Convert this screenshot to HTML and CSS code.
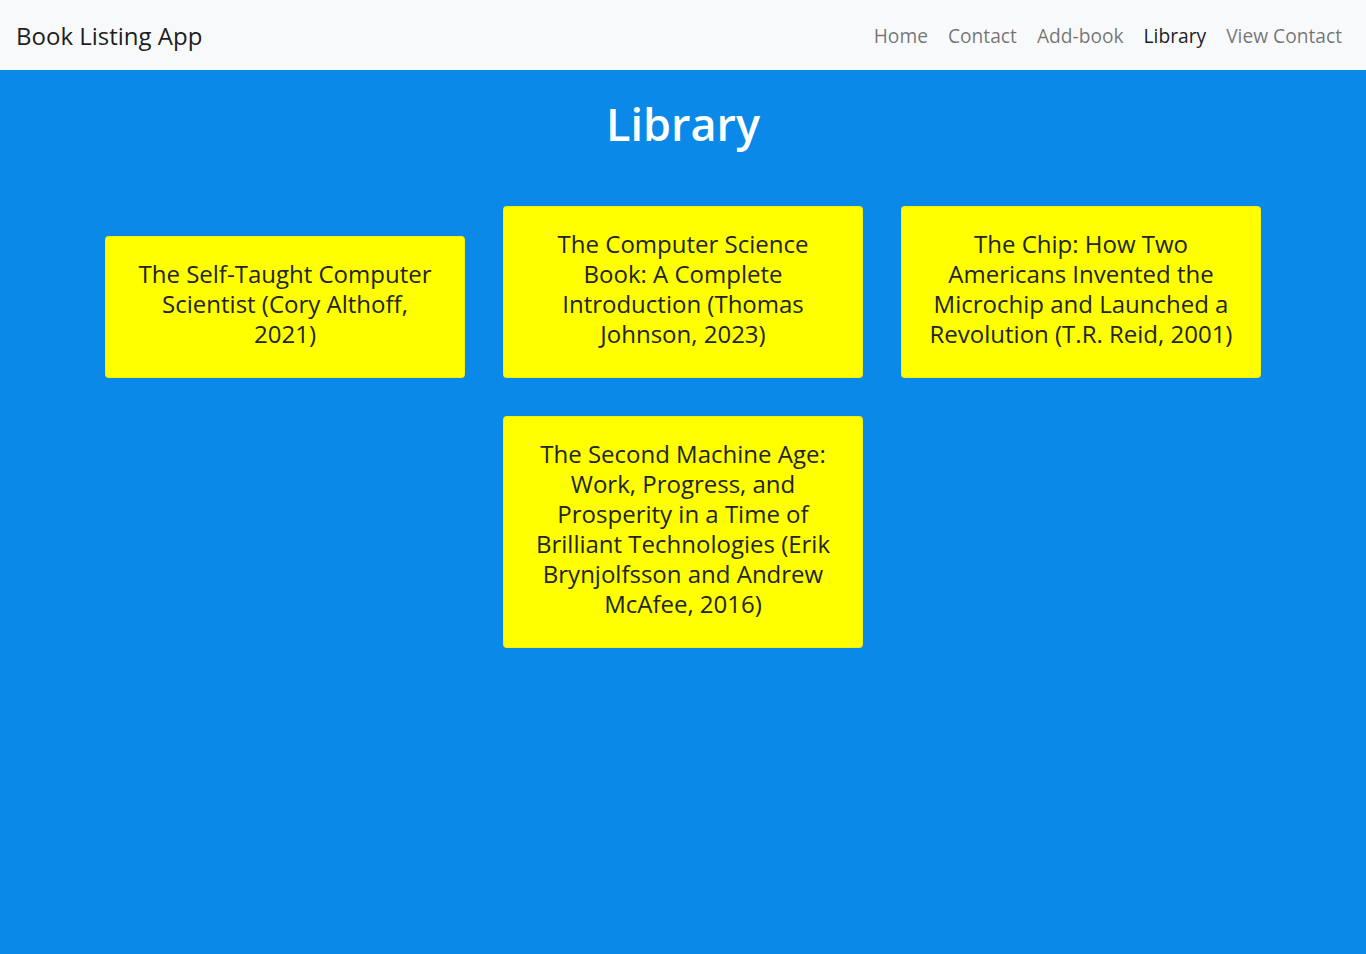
FILE: index.html
```html
<!DOCTYPE html>
<html lang="en">
<head>
<meta charset="utf-8">
<title>Book Listing App</title>
<link rel="stylesheet" href="styles.css">
</head>
<body>
<nav class="navbar">
  <a class="brand" href="#">Book Listing App</a>
  <ul class="nav">
    <li><a class="nav-link" href="#">Home</a></li>
    <li><a class="nav-link" href="#">Contact</a></li>
    <li><a class="nav-link" href="#">Add-book</a></li>
    <li><a class="nav-link active" href="#">Library</a></li>
    <li><a class="nav-link" href="#">View Contact</a></li>
  </ul>
</nav>
<main class="library">
  <h1 class="title">Library</h1>
  <div class="books">
    <div class="book">The Self-Taught Computer Scientist (Cory Althoff, 2021)</div>
    <div class="book">The Computer Science Book: A Complete Introduction (Thomas Johnson, 2023)</div>
    <div class="book">The Chip: How Two Americans Invented the Microchip and Launched a Revolution (T.R. Reid, 2001)</div>
    <div class="book">The Second Machine Age: Work, Progress, and Prosperity in a Time of Brilliant Technologies (Erik Brynjolfsson and Andrew McAfee, 2016)</div>
  </div>
</main>
</body>
</html>
```
FILE: styles.css
```css
* { box-sizing: border-box; }
html, body { margin: 0; padding: 0; height: 100%; }
body {
  font-family: "Open Sans", "Noto Sans", sans-serif;
  background: #0a89e8;
  color: #212529;
}
.navbar {
  height: 70px;
  background: #f8f9fa;
  display: flex;
  align-items: center;
  justify-content: space-between;
  padding: 0 14px 0 16px;
}
.brand {
  font-size: 24px;
  color: rgba(0,0,0,.9);
  text-decoration: none;
}
.nav {
  list-style: none;
  margin: 0;
  padding: 0;
  display: flex;
}
.nav-link {
  display: block;
  padding: 8px 10px;
  font-size: 19.2px;
  color: rgba(0,0,0,.55);
  text-decoration: none;
}
.nav-link.active { color: rgba(0,0,0,.9); }
.library {
  padding-top: 25px;
}
.title {
  margin: 0 0 53px;
  text-align: center;
  color: #fff;
  font-size: 45px;
  font-weight: 600;
  line-height: 58px;
}
.books {
  display: flex;
  flex-wrap: wrap;
  justify-content: center;
  align-items: flex-end;
  gap: 38px;
  max-width: 1160px;
  margin: 0 auto;
}
.book {
  width: 360px;
  background: #ffff00;
  border: 1px solid rgba(0,0,0,.05);
  border-radius: 4px;
  padding: 22px 25px 28px;
  text-align: center;
  font-size: 24px;
  line-height: 30px;
}
```
